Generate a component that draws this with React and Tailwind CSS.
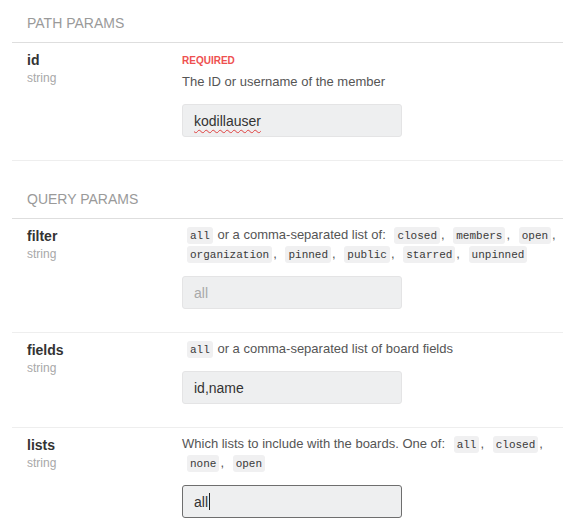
import React from "react";

function Code({ children }) {
  return (
    <code className="ml-[5px] mr-[1px] rounded-[3px] bg-[#f0f0f1] px-[3px] pt-[3px] pb-[2px] font-['Liberation_Mono',monospace] text-[11px] text-[#3a3a3a]">
      {children}
    </code>
  );
}

function List({ items }) {
  return items.map((it, i) => (
    <React.Fragment key={it}>
      <Code>{it}</Code>
      {i < items.length - 1 ? ", " : ""}
    </React.Fragment>
  ));
}

function Header({ children, first }) {
  return (
    <div
      className={`border-b border-[#dedede] pl-[15px] pt-[13px] pb-[9px] text-[14px] leading-[20px] text-[#9a9a9a] ${
        first ? "" : "mt-[15px]"
      }`}
    >
      {children}
    </div>
  );
}

function Row({ name, last, children }) {
  return (
    <div className={`flex pl-[15px] pt-[7px] pb-[23px] ${last ? "" : "border-b border-[#eeeeee]"}`}>
      <div className="w-[155px] shrink-0">
        <div className="text-[14px] font-bold leading-[20px] text-[#333]">{name}</div>
        <div className="text-[12px] leading-[16px] text-[#a8a8a8]">string</div>
      </div>
      <div className="min-w-0 flex-1">{children}</div>
    </div>
  );
}

function Input({ children, focused, placeholder }) {
  return (
    <div
      className={`mt-[12px] flex h-[33px] w-[220px] items-center rounded-[3px] border bg-[#eeeff0] px-[11px] text-[14px] leading-[20px] ${
        focused ? "border-[#6e6e6e]" : "border-[#e4e4e5]"
      } ${placeholder ? "text-[#a9a9a9]" : "text-[#333]"}`}
    >
      {children}
    </div>
  );
}

export default function App() {
  return (
    <div className="h-[530px] w-[570px] overflow-hidden bg-white pl-[12px] pr-[7px] font-['Liberation_Sans',Arial,sans-serif]">
      <Header first>PATH PARAMS</Header>
      <Row name="id">
        <div className="mt-[3px] text-[10px] font-bold leading-[16px] text-[#ee5050]">REQUIRED</div>
        <div className="mt-[3px] text-[13px] leading-[20px] text-[#555]">The ID or username of the member</div>
        <Input>
          <span className="underline decoration-[#e0403f] decoration-wavy decoration-1 underline-offset-[3px]">
            kodillauser
          </span>
        </Input>
      </Row>

      <Header>QUERY PARAMS</Header>
      <Row name="filter">
        <div className="text-[13px] leading-[18px] text-[#555]">
          <Code>all</Code> or a comma-separated list of:{" "}
          <List items={["closed", "members", "open", "organization", "pinned", "public", "starred", "unpinned"]} />
        </div>
        <Input placeholder>all</Input>
      </Row>
      <Row name="fields">
        <div className="text-[13px] leading-[18px] text-[#555]">
          <Code>all</Code> or a comma-separated list of board fields
        </div>
        <Input>id,name</Input>
      </Row>
      <Row name="lists" last>
        <div className="text-[13px] leading-[18px] text-[#555]">
          Which lists to include with the boards. One of:{" "}
          <List items={["all", "closed", "none", "open"]} />
        </div>
        <Input focused>
          <span>all</span>
          <span className="ml-[1px] inline-block h-[17px] w-px bg-[#222]"></span>
        </Input>
      </Row>
    </div>
  );
}
